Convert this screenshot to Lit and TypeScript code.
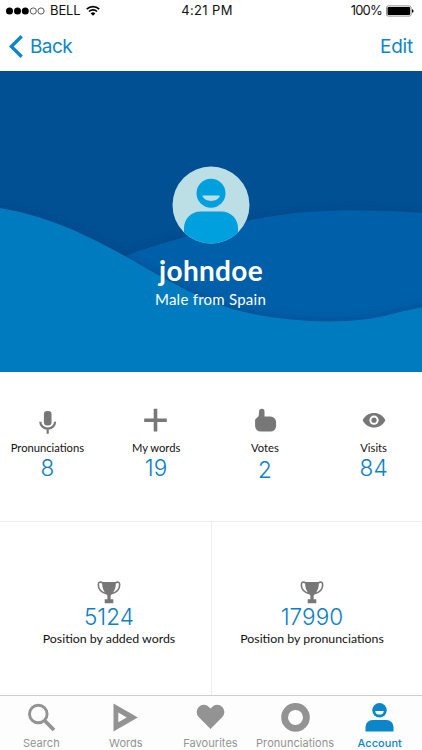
import { LitElement, html, css, svg } from "lit";
import { customElement } from "lit/decorators.js";
import { classMap } from "lit/directives/class-map.js";

const stats = [
  { id: "mic", label: "Pronunciations", value: "8" },
  { id: "plus", label: "My words", value: "19" },
  { id: "thumb", label: "Votes", value: "2" },
  { id: "eye", label: "Visits", value: "84" },
];
const ranks = [
  { value: "5124", label: "Position by added words" },
  { value: "17990", label: "Position by pronunciations" },
];
const tabs = [
  { id: "search", label: "Search" },
  { id: "words", label: "Words" },
  { id: "heart", label: "Favourites" },
  { id: "ring", label: "Pronunciations" },
  { id: "account", label: "Account" },
];

const shapes: Record<string, unknown> = {
  mic: svg`<rect x="11.900" y="5" width="7.600" height="14.600" rx="3.300" fill="currentColor"/><path d="M8.300 15.800a7.400 6.900 0 0 0 14.800 0M15.700 22.600V27.800" fill="none" stroke="currentColor" stroke-width="2.200"/>`,
  plus: svg`<path d="M3.200 14.200H25.800M14.500 2.800V25.400" stroke="currentColor" stroke-width="3.600"/>`,
  thumb: svg`<path d="M9.100 5.400a2.700 2.700 0 0 1 5.400 0V10.500H20.500a5.600 5.600 0 0 1 5.600 5.600V20a5.600 5.600 0 0 1-5.600 5.600H10.700A5.600 5.600 0 0 1 5.100 20V14.600C5.100 12 8.300 11.600 8.700 9.400Z" fill="currentColor"/>`,
  eye: svg`<path d="M3.600 14.200C6.200 9.200 10.300 6.900 15 6.900s8.800 2.300 11.400 7.300C23.800 19.200 19.700 21.500 15 21.500S6.200 19.200 3.600 14.200Z" fill="currentColor"/><circle cx="15" cy="14.200" r="4.600" fill="#fff"/><circle cx="15" cy="14.200" r="2.600" fill="currentColor"/>`,
  search: svg`<circle cx="12.300" cy="13" r="8.800" fill="none" stroke="currentColor" stroke-width="2.900"/><path d="M18.500 19.500 28 29" stroke="currentColor" stroke-width="3.800"/>`,
  words: svg`<path fill-rule="evenodd" d="M3.500 2.500 27.800 16.400 3.500 30.400ZM8.300 11.600V21.200L16.700 16.400Z" fill="currentColor"/>`,
  heart: svg`<path d="M15.500 28 3.700 16.100A7.150 7.150 0 0 1 13.900 6L15.500 7.600 17.100 6A7.150 7.150 0 0 1 27.300 16.100Z" fill="currentColor"/>`,
  ring: svg`<circle cx="15.500" cy="16.400" r="10.900" fill="none" stroke="currentColor" stroke-width="6.800"/>`,
  account: svg`<circle cx="15.500" cy="9.300" r="7.200" fill="currentColor"/><path d="M11.300 9.900h8.400a4.200 3.600 0 0 1-8.400 0Z" fill="#fff"/><path d="M1.500 30.500V26a7 7 0 0 1 7-7h14a7 7 0 0 1 7 7v4.500Z" fill="currentColor"/>`,
};

@customElement("app-root")
class AppRoot extends LitElement {
  static styles = css`
    :host { display: flex; flex-direction: column; width: 422px; height: 750px; background: #fff; overflow: hidden; font-family: Inter, "Liberation Sans", sans-serif; color: #111; }
    * { box-sizing: border-box; }
    svg { display: block; flex: none; }
    span { white-space: nowrap; }
    .status { display: grid; grid-template-columns: 1fr auto 1fr; height: 21px; padding: 0 8px 0 6px; align-items: center; font-size: 13px; line-height: 21px; }
    .carrier, .power { display: flex; align-items: center; }
    .carrier { gap: 5px; }
    .power { justify-content: flex-end; gap: 4px; letter-spacing: -0.8px; }
    .clock { letter-spacing: 0.35px; padding-right: 6px; }
    .bell { letter-spacing: -0.1px; }
    .nav { height: 50px; display: flex; justify-content: space-between; align-items: center; padding: 2px 9px 0 8px; color: #0b86cb; font-size: 19px; line-height: 24px; }
    .back { display: flex; align-items: center; gap: 6px; letter-spacing: -0.6px; }
    .edit { letter-spacing: -0.2px; }
    .hero { height: 301px; display: grid; justify-items: center; flex: none; background: #005093; }
    .scene { grid-area: 1 / 1; }
    .person { grid-area: 1 / 1; z-index: 1; display: flex; flex-direction: column; align-items: center; padding-top: 95px; color: #fff; font-family: Lato, sans-serif; }
    .name { font-weight: 700; font-size: 28px; line-height: 36px; margin-top: 8px; letter-spacing: 0.3px; }
    .origin { font-size: 15px; line-height: 20px; letter-spacing: 0.25px; padding-right: 1px; margin-top: 1px; }
    .stats { height: 149px; flex: none; display: grid; grid-template-columns: repeat(4, 1fr); margin: 0 -6px 0 -7px; padding-top: 34px; }
    .stat, .rank { display: flex; flex-direction: column; align-items: center; }
    .icon { color: #777; }
    .label { font: 11.200px/18px Lato, sans-serif; margin-top: 3px; }
    .value { font-size: 22.500px; line-height: 26px; font-weight: 350; letter-spacing: 0.1px; color: #0b80c5; margin-top: -2px; }
    .low { margin-top: 0; }
    .ranks { height: 174px; flex: none; display: grid; grid-template-columns: 211px 1fr; border-top: 1px solid #ececec; }
    .rank { padding: 58px 0 0 7px; }
    .rank + .rank { padding: 58px 10px 0 0; border-left: 1px solid #ececec; }
    .rank .value { margin-top: 0; }
    .rank .label { font-size: 12.350px; line-height: 17px; margin-top: 0; }
    .tabbar { height: 55px; flex: none; border-top: 1px solid #cfcfcf; background: #fdfdfd; }
    .tabs { display: grid; grid-template-columns: repeat(5, 1fr); margin-left: -1px; }
    .tab { display: flex; flex-direction: column; align-items: center; color: #939393; padding-top: 5px; }
    .tab.active { color: #0b86cb; }
    .tab span { font-size: 11px; line-height: 14px; margin-top: 3px; letter-spacing: 0.05px; }
    .tab.active span { font-weight: 450; }
  `;

  private icon(id: string) {
    return html`<svg class="icon" width="30" height="30" viewBox="0 0 30 30">${shapes[id]}</svg>`;
  }

  private trophy() {
    return html`<svg class="icon" width="24" height="24" viewBox="0 0 24 24">
      <path d="M5 2h14c0 6-1.800 10-5.400 13.500v3.700h2.700v4H7.700v-4h2.700v-3.700C6.800 12 5 8 5 2Z" fill="currentColor"/>
      <path d="M6 3C3.500 1.600 1.300 1.800 1.300 4.700c0 4.300 3.500 7.700 8.200 9M18 3c2.500-1.400 4.700-1.200 4.700 1.700 0 4.300-3.500 7.700-8.200 9" fill="none" stroke="currentColor" stroke-width="1.600"/>
    </svg>`;
  }

  render() {
    return html`
      <div class="status">
        <div class="carrier">
          <svg width="39" height="10" viewBox="0 0 39 10">
            ${[3.5, 11.5, 19.3].map((x) => svg`<circle cx=${x} cy="5" r="3.500" fill="#000"/>`)}
            ${[27.3, 35].map((x) => svg`<circle cx=${x} cy="5" r="3.100" fill="none" stroke="#333" stroke-width=".8"/>`)}
          </svg>
          <span class="bell">BELL</span>
          <svg width="14" height="11" viewBox="0 0 14 11">
            <path d="M.8 4.100a8.800 8.800 0 0 1 12.400 0M3 6.500a5.700 5.700 0 0 1 8 0" fill="none" stroke="#000" stroke-width="1.700"/>
            <path d="M4.700 8.400a3.300 3.300 0 0 1 4.600 0L7 10.800Z"/>
          </svg>
        </div>
        <span class="clock">4:21 PM</span>
        <div class="power">
          <span>100%</span>
          <svg width="28" height="12" viewBox="0 0 28 12">
            <rect x=".5" y=".9" width="24.600" height="10.200" rx="1.800" fill="#fff" stroke="#777" stroke-width=".8"/>
            <rect x="1.500" y="2" width="22.600" height="8" rx="1"/><path d="M26 4.300q1.600.2 1.600 1.700T26 7.700Z"/>
          </svg>
        </div>
      </div>
      <div class="nav">
        <div class="back">
          <svg width="16" height="24" viewBox="0 0 16 24"><path d="M13.700 1.300 3.300 11.500l10.400 10.200" fill="none" stroke="currentColor" stroke-width="3.300"/></svg>
          <span>Back</span>
        </div>
        <span class="edit">Edit</span>
      </div>
      <div class="hero">
        <svg class="scene" width="422" height="301" viewBox="0 71 422 301">
          <defs>
            <filter id="shade" x="-10%" y="-20%" width="120%" height="140%"><feGaussianBlur stdDeviation="4"/></filter>
            <path id="far" d="M90 270C150 244 190 236 237 223C300 208 360 208 440 214V390H90Z"/>
            <path id="near" d="M-20 205C40 212 80 231 125 256C170 282 205 302 240 311C290 323 350 325 388 315Q405 310 440 304V400H-20Z"/>
          </defs>
          <use href="#far" fill="#003b78" opacity=".6" filter="url(#shade)"/>
          <use href="#far" fill="#005fa9"/>
          <use href="#near" fill="#003b78" opacity=".6" filter="url(#shade)"/>
          <use href="#near" fill="#007bc0"/>
        </svg>
        <div class="person">
          <svg width="78" height="78" viewBox="0 0 78 78">
            <clipPath id="disc"><circle cx="39" cy="39" r="38.500"/></clipPath>
            <g clip-path="url(#disc)">
              <rect width="78" height="78" fill="#bbdfe5"/>
              <circle cx="39" cy="27.200" r="14.500" fill="#00a0df"/>
              <path d="M31.200 29.400h15.900c.5 0 .8.300.6.900-2.400 6.200-14.700 6.200-17.100 0-.2-.6.100-.9.600-.9Z" fill="#bbdfe5"/>
              <path d="M12 78V62a16.500 16.500 0 0 1 16.500-16.500h21A16.500 16.500 0 0 1 66 62v16Z" fill="#00a0df"/>
            </g>
          </svg>
          <span class="name">johndoe</span>
          <span class="origin">Male from Spain</span>
        </div>
      </div>
      <div class="stats">
        ${stats.map((s) => html`<div class="stat">${this.icon(s.id)}<span class="label">${s.label}</span>
          <span class=${classMap({ value: true, low: s.id === "thumb" })}>${s.value}</span></div>`)}
      </div>
      <div class="ranks">
        ${ranks.map((r) => html`<div class="rank">${this.trophy()}<span class="value">${r.value}</span><span class="label">${r.label}</span></div>`)}
      </div>
      <div class="tabbar"><div class="tabs">
        ${tabs.map((t) => html`<div class=${classMap({ tab: true, active: t.id === "account" })}>
          <svg width="31" height="32" viewBox="0 0 31 32">${shapes[t.id]}</svg><span>${t.label}</span></div>`)}
      </div></div>
    `;
  }
}
